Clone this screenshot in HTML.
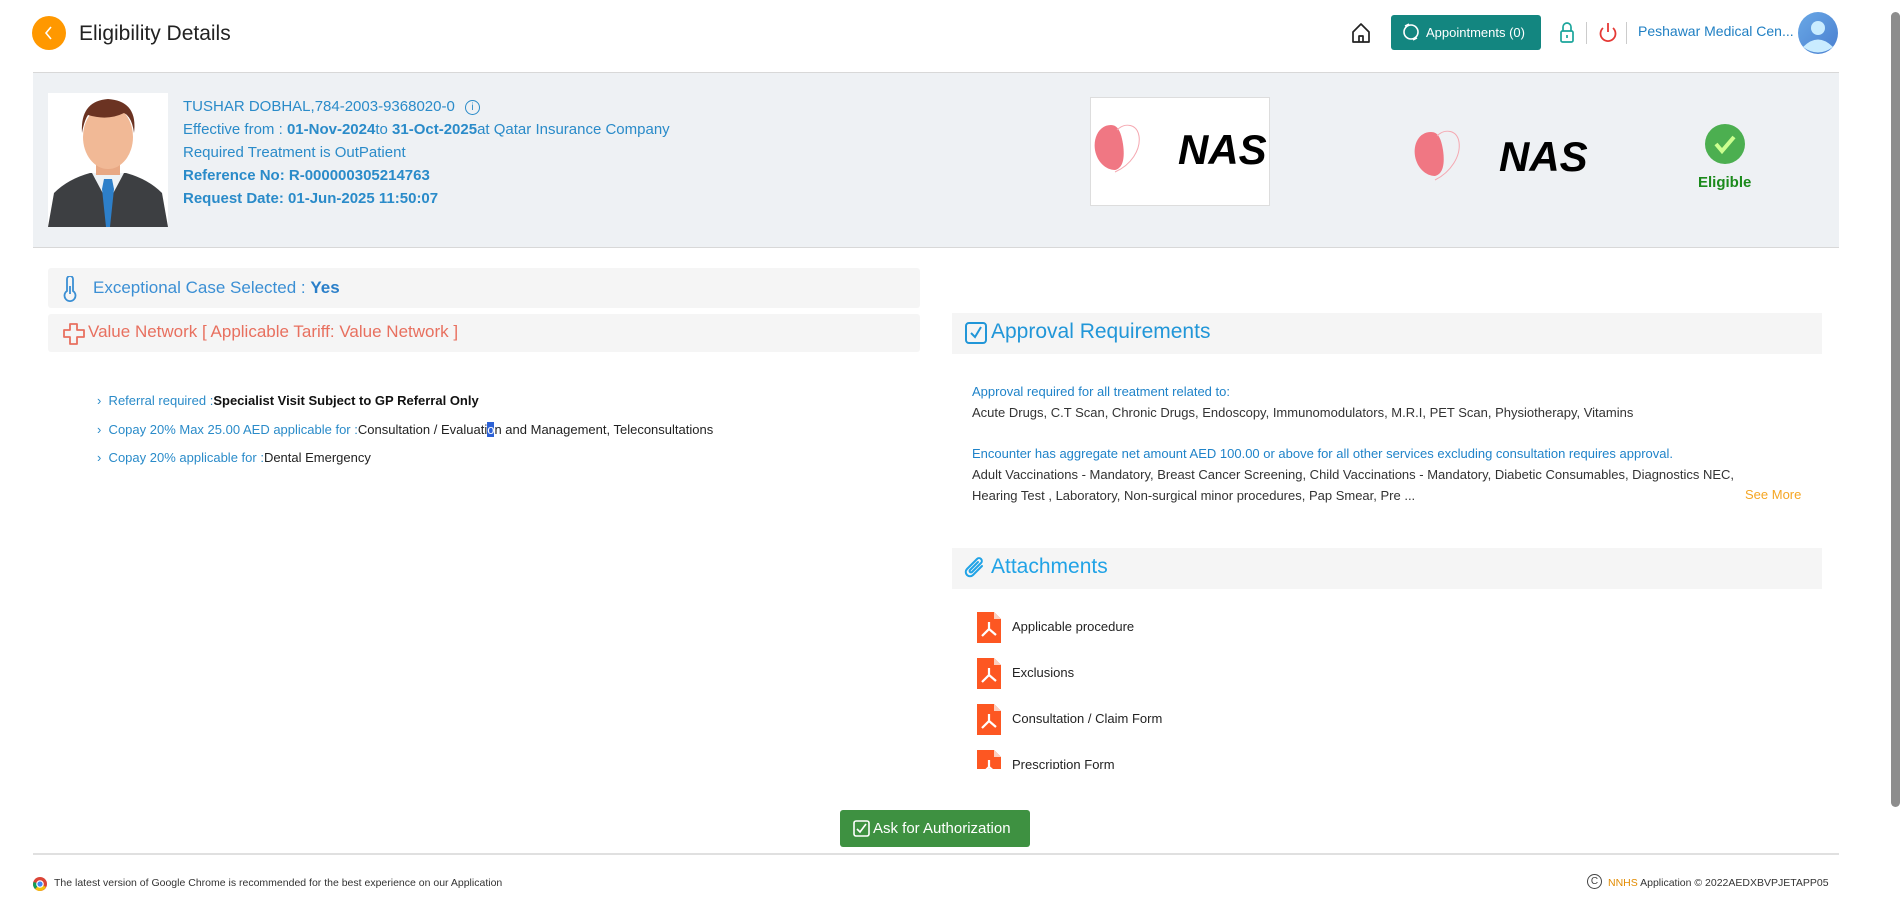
<!DOCTYPE html>
<html><head><meta charset="utf-8"><style>
*{margin:0;padding:0;box-sizing:border-box}
body{width:1903px;height:898px;overflow:hidden;background:#fff;font-family:"Liberation Sans",sans-serif;position:relative;color:#222}
.a{position:absolute;white-space:nowrap}
.blue{color:#2a8bc9}
</style></head><body>
<!-- header -->
<div class="a" style="left:32px;top:16px;width:34px;height:34px;border-radius:50%;background:#ff9800"></div>
<svg class="a" style="left:32px;top:16px" width="34" height="34"><path d="M19 11 L14 17 L19 23" stroke="#fff" stroke-width="1.6" fill="none"/></svg>
<div class="a" style="left:79px;top:22px;font-size:21px;color:#222">Eligibility Details</div>

<svg class="a" style="left:1350px;top:21px" width="22" height="24" viewBox="0 0 22 24"><path d="M3 11 L11 3 L19 11 V21 H3 Z M9 21 V15 H13 V21" stroke="#222" stroke-width="1.7" fill="none" stroke-linejoin="round"/></svg>
<div class="a" style="left:1391px;top:15px;width:150px;height:35px;background:#138680;border-radius:3px;color:#fff;font-size:13px;line-height:35px;padding-left:35px">Appointments (0)</div>
<svg class="a" style="left:1401px;top:22px" width="20" height="20"><circle cx="10" cy="10" r="7" stroke="#fff" stroke-width="1.6" fill="none"/><path d="M4 4 L8 2 M16 16 L12 18" stroke="#fff" stroke-width="1.5"/></svg>
<svg class="a" style="left:1558px;top:20px" width="18" height="24"><path d="M5 11 V7 a4 4 0 0 1 8 0 V11" stroke="#1aa59b" stroke-width="1.7" fill="none"/><rect x="3" y="11" width="12" height="11" rx="1.5" stroke="#1aa59b" stroke-width="1.7" fill="none"/><line x1="9" y1="15" x2="9" y2="18" stroke="#1aa59b" stroke-width="1.7"/></svg>
<div class="a" style="left:1586px;top:22px;width:1px;height:22px;background:#ccc"></div>
<svg class="a" style="left:1597px;top:20px" width="22" height="24"><path d="M6 8 a7.5 7.5 0 1 0 10 0" stroke="#e53935" stroke-width="1.8" fill="none"/><line x1="11" y1="3" x2="11" y2="12" stroke="#e53935" stroke-width="1.8"/></svg>
<div class="a" style="left:1626px;top:22px;width:1px;height:22px;background:#ccc"></div>
<div class="a" style="left:1638px;top:23px;font-size:14px;color:#1f7fc3">Peshawar Medical Cen...</div>
<svg class="a" style="left:1798px;top:12px" width="40" height="42"><defs><linearGradient id="ag" x1="0" y1="0" x2="1" y2="1"><stop offset="0" stop-color="#69a8e6"/><stop offset="1" stop-color="#4a7fd0"/></linearGradient></defs><ellipse cx="20" cy="21" rx="20" ry="21" fill="url(#ag)"/><circle cx="20" cy="16" r="7" fill="#c9ecff"/><path d="M5 35 Q20 20 35 35 Q20 46 5 35Z" fill="#c9ecff"/></svg>
<div class="a" style="left:1891px;top:12px;width:9px;height:795px;background:#8d8d8d;border-radius:5px"></div>

<!-- band -->
<div class="a" style="left:33px;top:72px;width:1806px;height:176px;background:#eef1f4;border-top:1px solid #d8d8d8;border-bottom:1px solid #d8d8d8"></div>
<div class="a" style="left:48px;top:93px;width:120px;height:134px;background:#fff;overflow:hidden">
<svg width="120" height="134"><path d="M0 134 L6 100 Q20 86 42 80 L78 80 Q100 86 114 100 L120 134Z" fill="#3d3f42"/><path d="M44 80 L60 110 L76 80Z" fill="#eef2f5"/><path d="M56 86 L64 86 L66 96 L62 134 L58 134 L54 96Z" fill="#2d7fc9"/><rect x="48" y="58" width="24" height="24" fill="#e8a884"/><ellipse cx="60" cy="44" rx="25" ry="32" fill="#f1b996"/><path d="M34 40 Q32 8 60 6 Q90 8 86 40 Q84 24 76 20 Q60 28 40 22 Q36 28 34 40Z" fill="#6b3322"/></svg></div>
<div class="a blue" style="left:183px;top:95px;font-size:15px;line-height:23px">
<div>TUSHAR DOBHAL,784-2003-9368020-0 <span style="display:inline-block;width:15px;height:15px;border:1.3px solid #2a8bc9;border-radius:50%;font-size:10px;text-align:center;line-height:13px;margin-left:6px;vertical-align:1px">i</span></div>
<div>Effective from : <b>01-Nov-2024</b>to <b>31-Oct-2025</b>at Qatar Insurance Company</div>
<div>Required Treatment is OutPatient</div>
<div><b>Reference No: R-000000305214763</b></div>
<div><b>Request Date: 01-Jun-2025 11:50:07</b></div>
</div>
<div class="a" style="left:1090px;top:97px;width:180px;height:109px;background:#fff;border:1px solid #ddd"></div>
<svg class="a" style="left:1091px;top:120px" width="178" height="70"><path d="M20 5 C8 5 2 18 4 30 C6 42 15 50 24 50 C32 48 34 38 32 24 C30 12 27 5 20 5Z" fill="#f07783"/><path d="M24 52 C40 45 50 30 48 16 C46 4 34 2 26 10" stroke="#f5a7b0" stroke-width="1" fill="none"/><text x="87" y="44" font-family="Liberation Sans" font-weight="bold" font-style="italic" font-size="42" fill="#000">NAS</text></svg>
<svg class="a" style="left:1411px;top:126px" width="180" height="70"><path d="M20 6 C8 6 2 18 4 30 C6 42 15 50 24 50 C32 48 34 38 32 24 C30 12 27 6 20 6Z" fill="#f07783"/><path d="M24 54 C40 46 50 30 48 16 C46 4 34 2 26 10" stroke="#f5a7b0" stroke-width="1" fill="none"/><text x="88" y="45" font-family="Liberation Sans" font-weight="bold" font-style="italic" font-size="42" fill="#000">NAS</text></svg>
<svg class="a" style="left:1704px;top:123px" width="42" height="42"><circle cx="21" cy="21" r="20" fill="#4caf50"/><path d="M12 21 L18 28 L30 14" stroke="#ccff90" stroke-width="4" fill="none"/></svg>
<div class="a" style="left:1698px;top:174px;font-size:15px;color:#1b8a1b;font-weight:bold">Eligible</div>

<!-- left -->
<div class="a" style="left:48px;top:268px;width:872px;height:40px;background:#f5f5f5;border-radius:3px"></div>
<svg class="a" style="left:62px;top:276px" width="16" height="26"><path d="M5 3 a3 3 0 0 1 6 0 V15 a5.5 5.5 0 1 1 -6 0Z" stroke="#3b8fd4" stroke-width="1.8" fill="none"/><line x1="8" y1="10" x2="8" y2="18" stroke="#3b8fd4" stroke-width="1.8"/></svg>
<div class="a" style="left:93px;top:278px;font-size:17px;color:#3b8fd4">Exceptional Case Selected : <b style="color:#2a7fc9">Yes</b></div>
<div class="a" style="left:48px;top:314px;width:872px;height:38px;background:#f5f5f5;border-radius:3px"></div>
<svg class="a" style="left:62px;top:322px" width="24" height="24"><path d="M8 2 H15 V8 H22 V15 H15 V22 H8 V15 H2 V8 H8Z" stroke="#e8705f" stroke-width="1.8" fill="none" stroke-linejoin="round"/></svg>
<div class="a" style="left:88px;top:322px;font-size:17px;color:#e8705f">Value Network [ Applicable Tariff: Value Network ]</div>
<div class="a" style="left:97px;top:387px;font-size:13px;line-height:28.5px">
<div><span class="blue">›&nbsp; Referral required :</span><b style="color:#111">Specialist Visit Subject to GP Referral Only</b></div>
<div><span class="blue">›&nbsp; Copay 20% Max 25.00 AED applicable for :</span>Consultation / Evaluati<span style="background:#2d62d6;color:#fff">o</span>n and Management, Teleconsultations</div>
<div><span class="blue">›&nbsp; Copay 20% applicable for :</span>Dental Emergency</div>
</div>

<!-- right -->
<div class="a" style="left:952px;top:313px;width:870px;height:41px;background:#f5f5f5"></div>
<svg class="a" style="left:964px;top:321px" width="24" height="24"><rect x="2" y="2" width="20" height="20" rx="3" stroke="#2196d8" stroke-width="2" fill="none"/><path d="M7 12 L11 16 L17 6" stroke="#2196d8" stroke-width="2" fill="none"/></svg>
<div class="a" style="left:991px;top:320px;font-size:21px;color:#2196d8">Approval Requirements</div>
<div class="a" style="left:972px;top:381px;font-size:13px;line-height:21px;color:#333">
<div style="color:#1f83c9">Approval required for all treatment related to:</div>
<div>Acute Drugs, C.T Scan, Chronic Drugs, Endoscopy, Immunomodulators, M.R.I, PET Scan, Physiotherapy, Vitamins</div>
<div style="height:20px"></div>
<div style="color:#1f83c9">Encounter has aggregate net amount AED 100.00 or above for all other services excluding consultation requires approval.</div>
<div>Adult Vaccinations - Mandatory, Breast Cancer Screening, Child Vaccinations - Mandatory, Diabetic Consumables, Diagnostics NEC,</div>
<div>Hearing Test , Laboratory, Non-surgical minor procedures, Pap Smear, Pre ...</div>
</div>
<div class="a" style="left:1745px;top:487px;font-size:13px;color:#f5a623">See More</div>

<div class="a" style="left:952px;top:548px;width:870px;height:41px;background:#f5f5f5"></div>
<svg class="a" style="left:963px;top:556px" width="24" height="26"><path d="M19 10 L10 19 a4 4 0 0 1 -6 -6 L14 3 a2.8 2.8 0 0 1 4 4 L9 16 a1.4 1.4 0 0 1 -2 -2 L15 6" stroke="#21a3e6" stroke-width="2" fill="none" stroke-linecap="round"/></svg>
<div class="a" style="left:991px;top:555px;font-size:21px;color:#21a3e6">Attachments</div>
<div class="a" style="left:952px;top:600px;width:300px;height:169px;overflow:hidden">
<div style="position:relative">
<div style="position:absolute;left:25px;top:12px"><svg width="24" height="31"><path d="M0 0 H17 L24 7 V31 H0Z" fill="#fd5722"/><path d="M17 0 V7 H24" fill="#fbd0c0"/><path d="M12 10 L12 17 L5 24 M12 17 L19 23" stroke="#fff" stroke-width="2.2" fill="none"/></svg></div>
<div style="position:absolute;left:60px;top:19px;font-size:13px">Applicable procedure</div>
<div style="position:absolute;left:25px;top:58px"><svg width="24" height="31"><path d="M0 0 H17 L24 7 V31 H0Z" fill="#fd5722"/><path d="M17 0 V7 H24" fill="#fbd0c0"/><path d="M12 10 L12 17 L5 24 M12 17 L19 23" stroke="#fff" stroke-width="2.2" fill="none"/></svg></div>
<div style="position:absolute;left:60px;top:65px;font-size:13px">Exclusions</div>
<div style="position:absolute;left:25px;top:104px"><svg width="24" height="31"><path d="M0 0 H17 L24 7 V31 H0Z" fill="#fd5722"/><path d="M17 0 V7 H24" fill="#fbd0c0"/><path d="M12 10 L12 17 L5 24 M12 17 L19 23" stroke="#fff" stroke-width="2.2" fill="none"/></svg></div>
<div style="position:absolute;left:60px;top:111px;font-size:13px">Consultation / Claim Form</div>
<div style="position:absolute;left:25px;top:150px"><svg width="24" height="31"><path d="M0 0 H17 L24 7 V31 H0Z" fill="#fd5722"/><path d="M17 0 V7 H24" fill="#fbd0c0"/><path d="M12 10 L12 17 L5 24 M12 17 L19 23" stroke="#fff" stroke-width="2.2" fill="none"/></svg></div>
<div style="position:absolute;left:60px;top:157px;font-size:13px">Prescription Form</div>
</div></div>

<!-- button & footer -->
<div class="a" style="left:840px;top:810px;width:190px;height:37px;background:#3e9141;border-radius:3px;color:#fff;font-size:15px;line-height:37px;padding-left:33px">Ask for Authorization</div>
<svg class="a" style="left:853px;top:820px" width="17" height="17"><rect x="1" y="1" width="15" height="15" rx="2" stroke="#fff" stroke-width="1.6" fill="none"/><path d="M4 9 L7 12 L13 4" stroke="#fff" stroke-width="1.6" fill="none"/></svg>
<div class="a" style="left:33px;top:853px;width:1806px;height:2px;background:#e0e0e0"></div>
<svg class="a" style="left:33px;top:877px" width="14" height="14"><circle cx="7" cy="7" r="7" fill="#db4437"/><path d="M7 7 L13 10 A7 7 0 0 1 2 12Z" fill="#f4c20d"/><path d="M7 7 L2 12 A7 7 0 0 1 0.5 5Z" fill="#0f9d58"/><circle cx="7" cy="7" r="3.2" fill="#4285f4" stroke="#fff" stroke-width="1.2"/></svg>
<div class="a" style="left:54px;top:877px;font-size:10.5px;color:#333">The latest version of Google Chrome is recommended for the best experience on our Application</div>
<div class="a" style="left:1587px;top:874px;width:15px;height:15px;border:1.3px solid #444;border-radius:50%;font-size:10px;line-height:13px;text-align:center;color:#444">C</div>
<div class="a" style="left:1608px;top:877px;font-size:10.5px;color:#333"><span style="color:#e38b00">NNHS</span> Application © 2022AEDXBVPJETAPP05</div>
</body></html>
